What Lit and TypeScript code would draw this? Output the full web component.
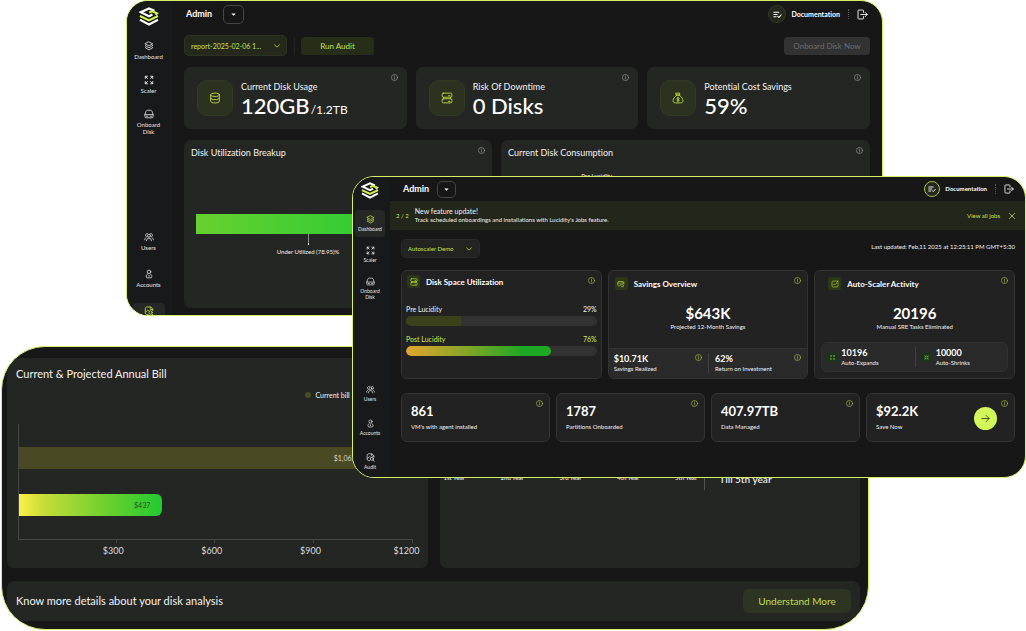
import { LitElement, html, css, svg } from "lit";
import { customElement, property } from "lit/decorators.js";
import { classMap } from "lit/directives/class-map.js";

const icons: Record<string, unknown> = {
  layers: svg`<path d="M8 1.5 14 4.6 8 7.7 2 4.6Z"/><path d="M2.6 7 2 7.5 8 10.8l6-3.3-.6-.5M2.6 10.2l-.6.5L8 14.2l6-3.5-.6-.5"/>`,
  expand: svg`<path stroke-width="1.5" d="M2 5.5V2h3.5M2 2l3.5 3.5M10.500 2H14v3.5M14 2l-3.5 3.500M2 10.5V14h3.5M2 14l3.5-3.5M10.500 14H14v-3.5M14 14l-3.5-3.5"/>`,
  shrink: svg`<path stroke-width="1.5" d="M6 2.5V6H2.5M6 6 2 2M10 2.500V6h3.500M10 6l4-4M6 13.500V10H2.500M6 10l-4 4M10 13.500V10h3.500M10 10l4 4"/>`,
  drive: svg`<path d="M1.5 9 3 4.200C3.500 2.600 4.500 2 6 2h4c1.500 0 2.500.6 3 2.200L14.500 9v3.500c0 1-.6 1.500-1.500 1.500H3c-.9 0-1.500-.5-1.500-1.500ZM1.500 9h13"/><path d="M4 11.500h2M10 11.500h2"/>`,
  users: svg`<circle cx="8" cy="6" r="2.4"/><path d="M4 14c0-2.600 1.600-4 4-4s4 1.400 4 4M4.500 8C2.800 7.500 2.300 6 2.600 4.500 3 3 4.300 2.300 5.600 2.600M11.500 8c1.700-.5 2.200-2 1.900-3.500-.4-1.500-1.700-2.200-3-1.900M1 12.500c.1-1.500.8-2.500 2-3.200M15 12.500c-.1-1.500-.8-2.500-2-3.200"/>`,
  account: svg`<circle cx="8" cy="4.5" r="2.8"/><path d="M5.500 8.200C4 9 3.500 10.500 3.500 12c0 1.500.7 2.200 2 2.200h5c1.300 0 2-.7 2-2.200 0-1.500-.5-3-2-3.800M8 10.200v1.600"/>`,
  audit: svg`<path d="M14 7.500V5l-3-3.500H5C3 1.500 2 2.500 2 4.500v6c0 2 1 3 3 3h1.500M10 2v2.500c0 .8.4 1.200 1.200 1.200H14M2.500 10 6 6.500l2 1.200"/><circle cx="10.500" cy="10.500" r="2.7"/><path d="m12.500 12.500 2.200 2.200"/>`,
  database: svg`<ellipse cx="8" cy="3.7" rx="5.8" ry="2.3"/><path d="M2.200 3.700v8.600c0 1.300 2.600 2.300 5.800 2.300s5.800-1 5.800-2.300V3.700M2.200 8c0 1.200 2.600 2.200 5.800 2.200s5.800-1 5.800-2.200"/>`,
  server: svg`<rect x="1.500" y="1.500" width="13" height="5.500" rx="1.600"/><rect x="1.500" y="9" width="13" height="5.500" rx="1.600"/><path d="M10 5h2M10 12.500h2M3.500 7v2M12.500 7v2"/>`,
  bag: svg`<path d="M5.500 1.500h5L9.800 4H6.200ZM5.500 4h5M6.200 4.500C3.200 6.500 1.500 9 1.500 11.500c0 2 1.200 3 3 3h7c1.800 0 3-1 3-3 0-2.500-1.700-5-4.700-7"/><path d="M9.700 8.300C9 7.500 6.600 7.400 6.600 8.800c0 1.300 3 .8 3 2.200 0 1.300-2.400 1.300-3.200.3M8 7v5.700"/>`,
  wallet: svg`<path d="M13.500 8V4.500c0-1-.6-1.500-1.500-1.500H3.500C2.300 3 1.500 3.600 1.500 4.700V10c0 1 .6 1.500 1.500 1.500h2M1.500 6h12"/><path d="M6.500 9.500h5c1 0 1.700.5 1.700 1.500v1c0 1-.7 1.500-1.700 1.500H9.800L8 12"/>`,
  activity: svg`<path d="M9.500 2H4.500C2.800 2 2 2.800 2 4.500v7C2 13.200 2.800 14 4.500 14h7c1.700 0 2.500-.8 2.500-2.500v-5"/><path d="m4.800 10 2-2.200 1.700 1.400 2.600-3M11.500 2H14v2.500M14 2l-2.500 2.500"/>`,
  info: svg`<circle cx="8" cy="8" r="7"/><path d="M8 7.500V11.500M8 4.500V5.500"/>`,
  checklist: svg`<path stroke-width="1.8" d="M1.500 4h9M1.500 8h6M1.500 12h4M8.500 11.200l2 2 4.200-4.700"/>`,
  logout: svg`<path d="M9.500 5V2.500c0-.6-.4-1-1-1h-6c-.6 0-1 .4-1 1v11c0 .6.4 1 1 1h6c.6 0 1-.4 1-1V11M5.500 8h9.300M12 5l2.900 3L12 11"/>`,
  close: svg`<path stroke-width="2" d="m1 1 14 14M15 1 1 15"/>`,
  arrow: svg`<path d="M1.500 8h13M9 2.500 14.500 8 9 13.500"/>`,
  chevron: svg`<path stroke-width="2" d="M1.500 5 8 11l6.500-6"/>`,
  caret: svg`<path fill="currentColor" stroke="none" d="M1 5h14L8 12Z"/>`,
};

const icon = (name: string) => html`<svg class="icon" viewBox="0 0 16 16" aria-hidden="true">${icons[name]}</svg>`;

const logo = html`<svg class="logo" viewBox="0 0 20 19" role="img" aria-label="Lucidity">
  <path fill="none" stroke="#fff" stroke-width="2.2" d="M15.500 3.700 10 1.500 1.800 5.200 10 9.200l3.500-1.700"/>
  <path fill="none" stroke="#d2f34c" stroke-width="2.2" d="M10.200 5.600 13 4.200l5 2.100-1.500 1.500M1 9l9 4.400L19 9"/>
  <path fill="none" stroke="#fff" stroke-width="2.2" d="m1 12.800 9 4.600 9-4.600"/>
</svg>`;

const base = css`
  * { box-sizing: border-box; }
  :host {
    display: block;
    overflow: hidden;
    border: 1px solid #d6f264;
    background: #171717;
    color: #f2f2f2;
    font-family: Lato, "Open Sans", sans-serif;
    font-variant-ligatures: none;
  }
  h2, h3, p { margin: 0; font-weight: 400; }
  button, select { font: inherit; color: inherit; border: 0; margin: 0; padding: 0; background: none; cursor: pointer; }
  a { color: inherit; text-decoration: none; }
  .icon { display: block; width: 100%; height: 100%; fill: none; stroke: currentColor; stroke-width: 1.3; stroke-linecap: round; stroke-linejoin: round; overflow: visible; }
  .shell { display: flex; align-items: stretch; }
  .main { flex: 1; min-width: 0; }
  .info { position: absolute; width: 7px; height: 7px; }
  .picker { position: relative; display: flex; border-radius: 5px; }
  .picker select { appearance: none; width: 100%; height: 100%; border-radius: 5px; outline-offset: 1px; }
  .picker .chev { position: absolute; top: 7px; width: 6px; height: 6px; pointer-events: none; }
`;

@customElement("side-nav")
class SideNav extends LitElement {
  @property() active = "";
  @property({ type: Boolean, reflect: true }) compact = false;

  static styles = css`
    * { box-sizing: border-box; }
    :host { display: flex; flex-direction: column; align-items: center; width: 45px; padding: 6px 2px 0 0; background: #17191b; color: #e6e6e6; flex: none; }
    .icon { display: block; width: 10px; height: 10px; fill: none; stroke: currentColor; stroke-width: 1.3; stroke-linecap: round; stroke-linejoin: round; }
    .logo { display: block; width: 20px; height: 19px; }
    nav { display: flex; flex-direction: column; }
    .top { gap: 8px; margin-top: 12px; }
    .bottom { gap: 11px; margin-top: 90px; }
    a { display: flex; flex-direction: column; align-items: center; gap: 2px; width: 32px; padding: 3px 0 4px; border-radius: 4px; color: inherit; text-decoration: none; font-size: 6px; line-height: 7px; text-align: center; }
    .mark { display: block; }
    .on { background: #262826; }
    .on .mark { color: #c5e24a; }
    :host([compact]) { width: 37px; padding: 5px 3px 2px 0; }
    :host([compact]) .logo { width: 18px; height: 17px; }
    :host([compact]) .icon { width: 9px; height: 9px; }
    :host([compact]) .top { gap: 4px; margin-top: 11px; }
    :host([compact]) .bottom { gap: 7px; margin-top: auto; }
    :host([compact]) a { width: 30px; padding: 5px 0; font-size: 5px; line-height: 6px; }
  `;

  item(name: string, glyph: string) {
    return html`<a href="#" class=${classMap({ on: this.active === name })}><span class="mark">${icon(glyph)}</span><span>${name}</span></a>`;
  }

  render() {
    return html`${logo}
      <nav class="top" aria-label="Storage">
        ${this.item("Dashboard", "layers")}${this.item("Scaler", "expand")}${this.item("Onboard Disk", "drive")}
      </nav>
      <nav class="bottom" aria-label="Administration">
        ${this.item("Users", "users")}${this.item("Accounts", "account")}${this.item("Audit", "audit")}
      </nav>`;
  }
}

@customElement("top-bar")
class TopBar extends LitElement {
  @property({ type: Boolean, reflect: true }) compact = false;

  static styles = css`
    * { box-sizing: border-box; }
    :host { display: flex; align-items: center; height: 26px; padding: 0 14px; font-size: 9px; line-height: 12px; font-weight: 700; color: #fff; }
    .icon { display: block; width: 100%; height: 100%; fill: none; stroke: currentColor; stroke-width: 1.3; stroke-linecap: round; stroke-linejoin: round; }
    button { display: grid; place-items: center; padding: 0; background: none; color: inherit; border: 0; cursor: pointer; }
    .menu { width: 21px; height: 19px; margin-left: 11px; border: 1px solid #464646; border-radius: 5px; }
    .menu span { width: 5px; height: 5px; }
    .docs { display: flex; align-items: center; gap: 5px; margin-left: auto; color: inherit; text-decoration: none; font-size: 7px; }
    .round { display: grid; place-items: center; width: 18px; height: 18px; border-radius: 50%; border: 1px solid #343a24; background: #24281d; }
    .round span { width: 9px; height: 9px; }
    .rule { height: 10px; margin: 0 8px; border-left: 1px dotted #555; }
    .out { width: 11px; height: 11px; }
    :host([compact]) { height: 24px; padding: 0 11px 0 13px; }
    :host([compact]) .menu { width: 19px; height: 17px; margin-left: 8px; }
    :host([compact]) .round { width: 16px; height: 16px; border-color: #a5bd44; }
    :host([compact]) .round span { width: 8px; height: 8px; }
    :host([compact]) .docs { gap: 5px; font-size: 6px; }
    :host([compact]) .out { width: 10px; height: 10px; }
  `;

  render() {
    return html`<span>Admin</span>
      <button class="menu" aria-label="Switch role"><span>${icon("caret")}</span></button>
      <a class="docs" href="#"><span class="round"><span>${icon("checklist")}</span></span>Documentation</a>
      <span class="rule"></span>
      <button class="out" aria-label="Log out">${icon("logout")}</button>`;
  }
}

@customElement("audit-window")
class AuditWindow extends LitElement {
  static styles = [base, css`
    :host { border-radius: 22px; }
    .body { display: flex; flex-direction: column; gap: 11px; padding: 8px 12px; }
    .tools { display: flex; align-items: center; height: 21px; font-size: 8px; }
    .picker { width: 103px; height: 21px; background: #24291b; color: #c5e24a; font-size: 7px; }
    .picker select { padding: 0 14px 0 6px; border: 1px solid #2d3320; }
    .picker .chev { right: 7px; top: 8px; }
    .rule { height: 18px; margin: 0 6px 0 7px; border-left: 1px solid #232323; }
    .run { width: 73px; height: 18px; border-radius: 4px; background: #262d19; color: #c5e24a; }
    .onboard { width: 86px; height: 18px; margin-left: auto; border-radius: 4px; background: #323232; color: #6d6d6d; }
    .cards { display: grid; grid-template-columns: repeat(3, 1fr); gap: 9px; }
    .card { position: relative; display: flex; align-items: center; gap: 8px; height: 62px; padding: 0 13px; border-radius: 7px; background: #242624; }
    .card .info, .panel .info { top: 7px; right: 9px; color: #a5a5a5; }
    .panel .info { right: 7px; }
    .tile { display: grid; place-items: center; width: 36px; height: 36px; border-radius: 10px; background: #2b3320; border: 1px solid #323b24; color: #b3d03f; }
    .tile span { width: 12px; height: 12px; }
    .stat { padding-top: 4px; }
    .card h3 { font-size: 9px; line-height: 12px; }
    .card p { display: flex; align-items: baseline; height: 26px; font-size: 22px; line-height: 26px; font-weight: 500; color: #fff; }
    .card small { margin-left: 1px; font-size: 12px; font-weight: 400; }
    .panels { display: grid; grid-template-columns: 308fr 369fr; gap: 9px; }
    .panel { position: relative; height: 168px; padding: 7px; border-radius: 7px; background: #242624; }
    .panel h3 { font-size: 9px; line-height: 12px; }
    .usage { padding: 55px 5px 0; }
    .used { height: 20px; background: linear-gradient(90deg, #66d12f, #3ccd33 60%, #22c832); }
    .note { display: flex; flex-direction: column; align-items: center; gap: 3px; font-size: 6px; line-height: 8px; }
    .pin { width: 1px; height: 11px; background: #8c8c8c; border-bottom: 2px solid #fff; }
    .split { display: grid; grid-template-columns: 1fr 1fr; margin-top: 13px; font-size: 6px; line-height: 8px; text-align: center; }
  `];

  render() {
    const cards = [
      ["database", "Current Disk Usage", "120GB", "/1.2TB"],
      ["server", "Risk Of Downtime", "0 Disks", ""],
      ["bag", "Potential Cost Savings", "59%", ""],
    ];
    const used = 78.95;
    return html`<div class="shell">
      <side-nav active="Audit"></side-nav>
      <div class="main">
        <top-bar></top-bar>
        <div class="body">
          <div class="tools">
            <label class="picker"><select aria-label="Report"><option>report-2025-02-06 1...</option></select><span class="chev">${icon("chevron")}</span></label>
            <span class="rule"></span>
            <button class="run">Run Audit</button>
            <button class="onboard" disabled>Onboard Disk Now</button>
          </div>
          <div class="cards">
            ${cards.map(([glyph, title, value, total]) => html`<section class="card">
              <div class="tile"><span>${icon(glyph)}</span></div>
              <div class="stat"><h3>${title}</h3><p>${value}${total ? html`<small>${total}</small>` : ""}</p></div>
              <span class="info">${icon("info")}</span>
            </section>`)}
          </div>
          <div class="panels">
            <section class="panel">
              <h3>Disk Utilization Breakup</h3>
              <span class="info">${icon("info")}</span>
              <div class="usage">
                <div style="width:${used}%"><div class="used"></div><div class="note"><span class="pin"></span>Under Utilized (${used})%</div></div>
              </div>
            </section>
            <section class="panel">
              <h3>Current Disk Consumption</h3>
              <span class="info">${icon("info")}</span>
              <div class="split"><span>Pre Lucidity</span></div>
            </section>
          </div>
        </div>
      </div>
    </div>`;
  }
}

@customElement("bill-window")
class BillWindow extends LitElement {
  static styles = [base, css`
    :host { border-radius: 44px; }
    .page { display: grid; gap: 13px; padding: 11px 8px 8px 5px; }
    .row { display: grid; grid-template-columns: 1fr 1fr; gap: 12px; }
    .panel { min-height: 210px; border-radius: 7px; background: #242624; }
    .bill { padding: 8px 9px 10px; }
    h2 { font-size: 11px; line-height: 16px; }
    .legend { display: grid; grid-template-columns: 5fr 2fr; margin-top: 8px; font-size: 7px; line-height: 10px; }
    .legend span { grid-column: 2; display: flex; align-items: center; gap: 5px; padding-left: 1px; }
    .legend i { width: 6px; height: 6px; border-radius: 50%; background: #4a4c24; }
    .chart { margin: 24px 6px 0 2px; }
    .plot { display: grid; gap: 25px; padding: 23px 0; border-left: 1px solid #454745; border-bottom: 1px solid #454745; }
    .bar { display: flex; align-items: center; justify-content: flex-end; height: 22px; padding-right: 12px; border-radius: 0 6px 6px 0; font-size: 7px; }
    .now { background: #494a24; color: #d5d6c4; }
    .next { background: linear-gradient(90deg, #fbf046, #c4dc38 18%, #6bd02f 62%, #22ca30); color: #1d5517; }
    .ticks { display: grid; grid-template-columns: repeat(4, 1fr); }
    .ticks i { height: 3px; border-right: 1px solid #454745; }
    .scale { display: grid; grid-template-columns: repeat(4, 1fr); margin: 2px -7px 0 7px; font-size: 9px; line-height: 12px; text-align: right; color: #dcdcdc; }
    .years { display: grid; grid-template-columns: 265fr 156fr; align-items: end; padding-bottom: 78px; color: #d8d8d8; }
    .labels { display: flex; justify-content: space-between; padding: 0 7px 8px 4px; font-size: 6px; line-height: 8px; font-weight: 700; }
    .total { display: flex; align-items: end; height: 60px; padding: 0 14px 5px; border-left: 1px solid #505250; font-size: 10px; line-height: 12px; font-weight: 700; }
    .foot { display: flex; align-items: center; justify-content: space-between; height: 40px; padding: 0 9px; border-radius: 8px; background: #242624; }
    .more { width: 108px; height: 24px; border-radius: 6px; background: #2d3422; color: #c2dd4e; font-size: 10px; }
  `];

  render() {
    const max = 1200;
    return html`<div class="page">
      <div class="row">
        <section class="panel bill">
          <h2>Current &amp; Projected Annual Bill</h2>
          <div class="legend"><span><i></i>Current bill</span></div>
          <div class="chart">
            <div class="plot">
              <div class="bar now" style="width:${(1063 / max) * 100}%">$1,063</div>
              <div class="bar next" style="width:${(437 / max) * 100}%">$437</div>
            </div>
            <div class="ticks"><i></i><i></i><i></i><i></i></div>
            <div class="scale">${[300, 600, 900, 1200].map((v) => html`<span>$${v}</span>`)}</div>
          </div>
        </section>
        <section class="panel years">
          <div class="labels">${["1st", "2nd", "3rd", "4th", "5th"].map((y) => html`<span>${y} Year</span>`)}</div>
          <div class="total">Till 5th year</div>
        </section>
      </div>
      <section class="foot"><h2>Know more details about your disk analysis</h2><button class="more">Understand More</button></section>
    </div>`;
  }
}

@customElement("dashboard-window")
class DashboardWindow extends LitElement {
  static styles = [base, css`
    :host { border-radius: 22px; }
    .banner { display: flex; align-items: center; height: 29px; padding: 0 10px 0 6px; background: #22261b; font-size: 6px; line-height: 8px; }
    .count, .jobs, .close { color: #c5e24a; }
    .msg { flex: 1; margin-left: 6px; }
    .msg h2 { font-size: 7px; line-height: 9px; }
    .close { width: 6px; height: 6px; margin-left: 9px; }
    .body { padding: 9px 10px 35px 11px; }
    .tools { display: flex; align-items: center; justify-content: space-between; height: 19px; font-size: 6px; line-height: 8px; }
    .stamp { padding-bottom: 3px; }
    .picker { width: 79px; height: 19px; background: #232422; color: #c5e24a; }
    .picker select { padding: 0 18px 0 6px; border: 1px solid #292a28; }
    .picker .chev { right: 8px; }
    .cards { display: grid; grid-template-columns: repeat(3, 1fr); gap: 6px; margin-top: 12px; }
    .box { position: relative; border: 1px solid #333; border-radius: 6px; background: #222; }
    .card { display: flex; flex-direction: column; height: 109px; }
    .box .info { top: 6px; right: 6px; color: #b3cc45; }
    .head { display: flex; align-items: center; gap: 6px; padding: 6px 6px 0; }
    .head h2 { font-size: 8px; line-height: 10px; font-weight: 700; color: #fff; }
    .space .head { padding: 4px 4px 0 5px; }
    .scaler .head { padding-left: 13px; }
    .tile { display: grid; place-items: center; width: 13px; height: 13px; border-radius: 2px; background: #2c3619; color: #b9d83d; }
    .tile span { width: 8px; height: 8px; }
    .meters { display: grid; gap: 9px; padding: 17px 4px 0; font-size: 7px; line-height: 9px; }
    .meter p { display: flex; justify-content: space-between; }
    .track { height: 10px; margin-top: 2px; border-radius: 5px; background: #323232; overflow: hidden; }
    .fill { height: 100%; }
    .pre .fill { background: #3b421b; }
    .post { color: #cdec4c; }
    .post .fill { border-radius: 5px; background: linear-gradient(90deg, #e3a62f, #7ca527 45%, #1fa824 80%); }
    .hero { text-align: center; margin-top: 14px; font-size: 6px; line-height: 9px; }
    .hero strong { display: block; font-size: 15px; line-height: 18px; font-weight: 700; color: #fff; }
    .pair { display: grid; grid-template-columns: 1fr 1fr; margin-top: auto; padding: 4px 0; background: #2a2a2a; font-size: 6px; line-height: 9px; }
    .pair > div { position: relative; display: flex; align-items: center; gap: 4px; padding-left: 5px; }
    .pair > div + div { border-left: 1px solid #404040; padding-left: 6px; }
    .pair strong { display: block; font-size: 9px; line-height: 11px; font-weight: 700; color: #fff; }
    .savings .pair { border-top: 1px solid #333; border-radius: 0 0 6px 6px; padding-bottom: 5px; }
    .savings .pair .info { top: 1px; right: 6px; }
    .scaler .pair { margin: auto 6px 6px; border: 1px solid #303030; border-radius: 6px; }
    .mini { display: grid; place-items: center; width: 10px; height: 10px; border-radius: 2px; background: #1e331c; color: #6fce3e; }
    .mini span { width: 5px; height: 5px; }
    .stats { display: grid; grid-template-columns: repeat(4, 1fr); gap: 6px; margin-top: 14px; }
    .stat { display: flex; align-items: center; justify-content: space-between; height: 49px; padding: 0 17px 2px 9px; font-size: 6px; line-height: 9px; }
    .stat strong { display: block; margin-bottom: 3px; font-size: 13px; line-height: 16px; font-weight: 700; color: #fff; }
    .go { display: grid; place-items: center; width: 23px; height: 23px; margin-top: 3px; border-radius: 50%; background: #d3f85a; color: #1c2110; }
    .go span { width: 9px; height: 9px; }
  `];

  meter(kind: string, label: string, value: number) {
    return html`<div class="meter ${kind}"><p><span>${label}</span><span>${value}%</span></p>
      <div class="track" role="progressbar" aria-label=${label} aria-valuenow=${value}><div class="fill" style="width:${value}%"></div></div></div>`;
  }

  head(glyph: string, title: string) {
    return html`<div class="head"><span class="tile"><span>${icon(glyph)}</span></span><h2>${title}</h2></div><span class="info">${icon("info")}</span>`;
  }

  render() {
    const stats = [["861", "VM's with agent installed"], ["1787", "Partitions Onboarded"], ["407.97TB", "Data Managed"], ["$92.2K", "Save Now"]];
    return html`<div class="shell">
      <side-nav compact active="Dashboard"></side-nav>
      <div class="main">
        <top-bar compact></top-bar>
        <div class="banner">
          <span class="count">2 / 2</span>
          <div class="msg"><h2>New feature update!</h2><p>Track scheduled onboardings and installations with Lucidity's Jobs feature.</p></div>
          <a class="jobs" href="#">View all jobs</a>
          <button class="close" aria-label="Dismiss">${icon("close")}</button>
        </div>
        <div class="body">
          <div class="tools">
            <label class="picker"><select aria-label="Environment"><option>Autoscaler Demo</option></select><span class="chev">${icon("chevron")}</span></label>
            <span class="stamp">Last updated: Feb,11 2025 at 12:25:11 PM GMT+5:30</span>
          </div>
          <div class="cards">
            <section class="box card space">${this.head("server", "Disk Space Utilization")}
              <div class="meters">${this.meter("pre", "Pre Lucidity", 29)}${this.meter("post", "Post Lucidity", 76)}</div>
            </section>
            <section class="box card savings">${this.head("wallet", "Savings Overview")}
              <div class="hero"><strong>$643K</strong>Projected 12-Month Savings</div>
              <div class="pair">
                <div><span><strong>$10.71K</strong>Savings Realized</span><span class="info">${icon("info")}</span></div>
                <div><span><strong>62%</strong>Return on Investment</span><span class="info">${icon("info")}</span></div>
              </div>
            </section>
            <section class="box card scaler">${this.head("activity", "Auto-Scaler Activity")}
              <div class="hero"><strong>20196</strong>Manual SRE Tasks Eliminated</div>
              <div class="pair">
                <div><span class="mini"><span>${icon("expand")}</span></span><span><strong>10196</strong>Auto-Expands</span></div>
                <div><span class="mini"><span>${icon("shrink")}</span></span><span><strong>10000</strong>Auto-Shrinks</span></div>
              </div>
            </section>
          </div>
          <div class="stats">
            ${stats.map(([value, label], i) => html`<section class="box stat">
              <div><strong>${value}</strong>${label}</div>
              <span class="info">${icon("info")}</span>
              ${i === 3 ? html`<button class="go" aria-label="Save now"><span>${icon("arrow")}</span></button>` : ""}
            </section>`)}
          </div>
        </div>
      </div>
    </div>`;
  }
}

@customElement("app-root")
class AppRoot extends LitElement {
  static styles = css`
    :host { display: block; position: relative; min-height: 100vh; background: #fff; overflow: hidden; }
    audit-window, bill-window, dashboard-window { position: absolute; box-sizing: border-box; }
    audit-window { top: 0; left: 126px; right: 143px; height: 316px; }
    bill-window { top: 346px; left: 1px; right: 157px; }
    dashboard-window { top: 176px; left: 352px; right: 0; }
  `;

  render() {
    return html`<audit-window></audit-window><bill-window></bill-window><dashboard-window></dashboard-window>`;
  }
}
